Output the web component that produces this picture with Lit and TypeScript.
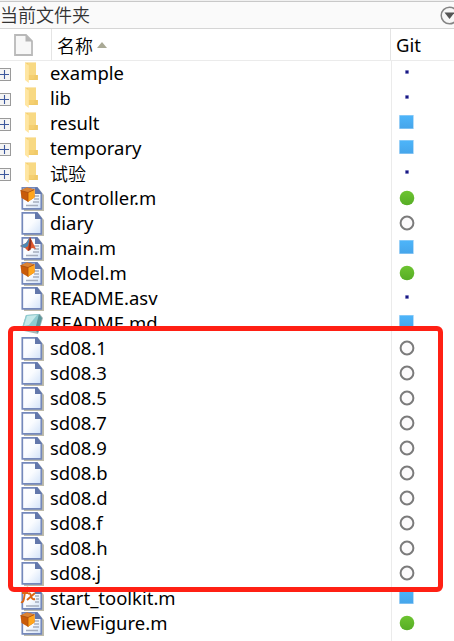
import { LitElement, html, css, svg } from "lit";
import { customElement } from "lit/decorators.js";

type Kind = "folder" | "class" | "file" | "matlab" | "note" | "func";
type Git = "dot" | "square" | "green" | "ring";

const rows: [string, Kind, Git][] = [
  ["example", "folder", "dot"],
  ["lib", "folder", "dot"],
  ["result", "folder", "square"],
  ["temporary", "folder", "square"],
  ["试验", "folder", "dot"],
  ["Controller.m", "class", "green"],
  ["diary", "file", "ring"],
  ["main.m", "matlab", "square"],
  ["Model.m", "class", "green"],
  ["README.asv", "file", "dot"],
  ["README.md", "note", "square"],
  ...["1", "3", "5", "7", "9", "b", "d", "f", "h", "j"].map(
    (s) => ["sd08." + s, "file", "ring"] as [string, Kind, Git]
  ),
  ["start_toolkit.m", "func", "square"],
  ["ViewFigure.m", "class", "green"],
];

const page = svg`
  <path d="M4 3H19L24 9V25H4Z" fill="#a9a58f" opacity=".75"/>
  <path d="M2.3 1.8H17L21.3 7.5V22.8H2.3Z" fill="url(#paper)" stroke="#7488bb" stroke-width="1.7"/>
  <path d="M15 1.5V8H22L17.5 1.5Z" fill="#6277ab"/>`;
const textLines = svg`<path d="M13 10H19M14 13H19M13 16H19M6 19.5H18" stroke="#a5adbd" stroke-width="1.3"/>`;

const art = {
  folder: svg`
    <path d="M5 1.5H16V14H17.8V19H8Z" fill="#f5cf70"/>
    <path d="M8 2H16V14H8Z" fill="#f8d983"/>
    <path d="M14.5 14H17.8V19H8L14.5 17.5Z" fill="#f0ca69"/>
    <path d="M5 1.5L8.8 4.5V22L5 19Z" fill="#ffe6a2"/>`,
  file: page,
  class: svg`${page}${textLines}
    <path d="M.5 4.5L7 1.5L14.5 3.5V11.5L8 15.8L1.5 12Z" fill="#c85b0b"/>
    <path d="M.5 4.5L7 1.5L14.5 3.5L8 6.5Z" fill="#dc8435"/>
    <path d="M8 6.5L14.5 3.5V11.5L8 15.8Z" fill="#ffa51c"/>
    <path d="M.5 4.5L8 6.5V15.8M8 6.5L14.5 3.5" stroke="#a84d0c" fill="none" stroke-width=".8"/>`,
  matlab: svg`${page}${textLines}
    <path d="M0 10L6 7L10 1L16 13L12 12L8 15L5 12Z" fill="#e0582e"/>
    <path d="M0 10L6 7L10 1L8 10L5 12Z" fill="#4d88b5"/>
    <path d="M10 1L11.5 5L10.5 14L8 15Z" fill="#8b3020"/>`,
  note: svg`
    <path d="M6 4L20 3L23 7L18 23L4 20L2 17Z" fill="#a7b8b8"/>
    <path d="M6 4L19 3L15 19L2 17Z" fill="#8dcbd0"/>
    <path d="M7 5L17 4L9 14L4 15Z" fill="#c5e9e9"/>
    <path d="M19 3L22 7L18 22L15 19Z" fill="#5b979d"/>`,
  func: svg`${page}
    <path d="M15 10H19M16 13H19M15 16H19M6 20H19" stroke="#a5adbd" stroke-width="1.3"/>
    <path d="M1 16C5 18 4 5 6 3Q7 1 9 2M2 7H8M8 8Q10 6 11 10T15 13M15 7L7 14" stroke="#db6715" stroke-width="1.9" fill="none"/>`,
};

const git = {
  dot: svg`<rect x="7" y="6" width="4" height="4" fill="#d4d4ee"/><rect x="7.5" y="6.5" width="3" height="3" fill="#171783"/>`,
  square: svg`<rect x="1" y="1" width="15" height="14" fill="#b7dcf8"/><rect x="1.7" y="1.5" width="13.3" height="13" fill="url(#blue)"/>`,
  green: svg`<circle cx="9" cy="9" r="7.3" fill="url(#green)"/>`,
  ring: svg`<circle cx="9" cy="9" r="6.4" fill="#fbfafb" stroke="#7b7b7b" stroke-width="2"/>`,
};

@customElement("file-row")
class FileRow extends LitElement {
  static properties = { name: {}, kind: {}, git: {} };
  declare name: string;
  declare kind: Kind;
  declare git: Git;
  static styles = css`
    :host { display: grid; grid-template-columns: 20px 30px 341px 1fr; height: 25px; align-items: center; }
    svg { display: block; overflow: visible; }
    .expand { width: 12px; height: 13px; margin-top: 2px; }
    .name { font-size: 18.5px; line-height: 25px; margin-top: -2px; white-space: pre; transform-origin: 0 50%; transform: scaleX(.998); }
    .cjk { transform: none; font-size: 18px; font-family: "Noto Sans CJK SC", sans-serif; font-weight: 350; margin-top: -1px; }
    .git { margin-left: 7px; margin-top: -2px; }
  `;
  render() {
    return html`
      <div>${this.kind === "folder"
        ? html`<svg class="expand" viewBox="0 0 12 13">
            <rect x="-2" y=".5" width="12.5" height="12" fill="#f4f4f4" stroke="#9a9a9a"/>
            <path d="M0 6.5H9M4.5 2V11" stroke="#3c579d" stroke-width="1.1"/></svg>`
        : ""}</div>
      <svg width="26" height="25" viewBox="0 0 26 25">
        <defs><linearGradient id="paper" x2="1" y2="1"><stop stop-color="#fff"/><stop offset=".5" stop-color="#fafcff"/><stop offset="1" stop-color="#d0e1f8"/></linearGradient></defs>
        ${art[this.kind]}
      </svg>
      <div class="name ${this.name === "试验" ? "cjk" : ""}">${this.name}</div>
      <svg class="git" width="18" height="17" viewBox="0 0 18 17">
        <defs>
          <linearGradient id="blue" x2="0" y2="1"><stop stop-color="#4db5fa"/><stop offset="1" stop-color="#46a5ea"/></linearGradient>
          <linearGradient id="green" x2="0" y2="1"><stop stop-color="#6dc431"/><stop offset="1" stop-color="#56ad25"/></linearGradient>
        </defs>${git[this.git]}
      </svg>`;
  }
}

@customElement("app-root")
class AppRoot extends LitElement {
  static styles = css`
    :host { display: block; position: relative; height: 641px; overflow: hidden; background: #fff; color: #000;
      font-family: "Noto Sans", "Noto Sans CJK SC", sans-serif; }
    .bar { display: flex; justify-content: space-between; align-items: center; box-sizing: border-box; height: 29px;
      border-top: 1px solid #f0f0f0; border-bottom: 1px solid #d5d5d5; background: #fafafa; box-shadow: inset 0 1px #c8c8c8;
      font-size: 18px; color: #333; overflow: hidden; }
    .title { font-family: "Noto Sans CJK SC", sans-serif; font-weight: 350; line-height: 24px; margin-top: -2px; }
    .bar svg { flex: none; margin-right: -5px; margin-top: 1px; }
    .head { display: grid; grid-template-columns: 52px 339px 1fr; box-sizing: border-box; height: 32px; border-bottom: 1px solid #ebebeb; }
    .cell { display: flex; align-items: center; border-right: 1px solid #e4e4e4; box-sizing: border-box; font-size: 18.5px; }
    .cell.icon { padding-left: 14px; }
    .cell.label { padding-left: 5px; gap: 4px; font-size: 18px; font-family: "Noto Sans CJK SC", sans-serif; font-weight: 350; }
    .cell.git { border: 0; padding-left: 5px; }
    .git span { margin-top: -1px; }
    .list { height: 580px; background: linear-gradient(#ebebeb, #ebebeb) 391px 0 / 1px 100% no-repeat; }
    .mark { position: absolute; left: 8px; top: 326px; width: 435px; height: 266px; box-sizing: border-box; border: 5px solid #ff2014; border-radius: 6px; }
  `;
  render() {
    return html`
      <div class="bar"><span class="title">当前文件夹</span>
        <svg width="19" height="19" viewBox="0 0 19 19"><circle cx="9.5" cy="9.5" r="8.3" fill="#f7f7f7" stroke="#858585" stroke-width="1.5"/><path d="M4.5 6.5H14.5L9.5 13Z" fill="#555"/></svg>
      </div>
      <div class="head">
        <div class="cell icon"><svg width="19" height="22" viewBox="0 0 19 22"><path d="M1 1H12L18 7V21H1Z" fill="#f7f7f7" stroke="#b9b9b9" stroke-width="1.8"/><path d="M11.5 1L18 7.5H11.5Z" fill="#b5b5b5"/></svg></div>
        <div class="cell label">名称<svg width="10" height="6" viewBox="0 0 10 6"><path d="M0 6L5 0L10 6Z" fill="#a9a995"/></svg></div>
        <div class="cell git"><span>Git</span></div>
      </div>
      <div class="list">${rows.map(([n, k, g]) => html`<file-row .name=${n} .kind=${k} .git=${g}></file-row>`)}</div>
      <div class="mark"></div>`;
  }
}
